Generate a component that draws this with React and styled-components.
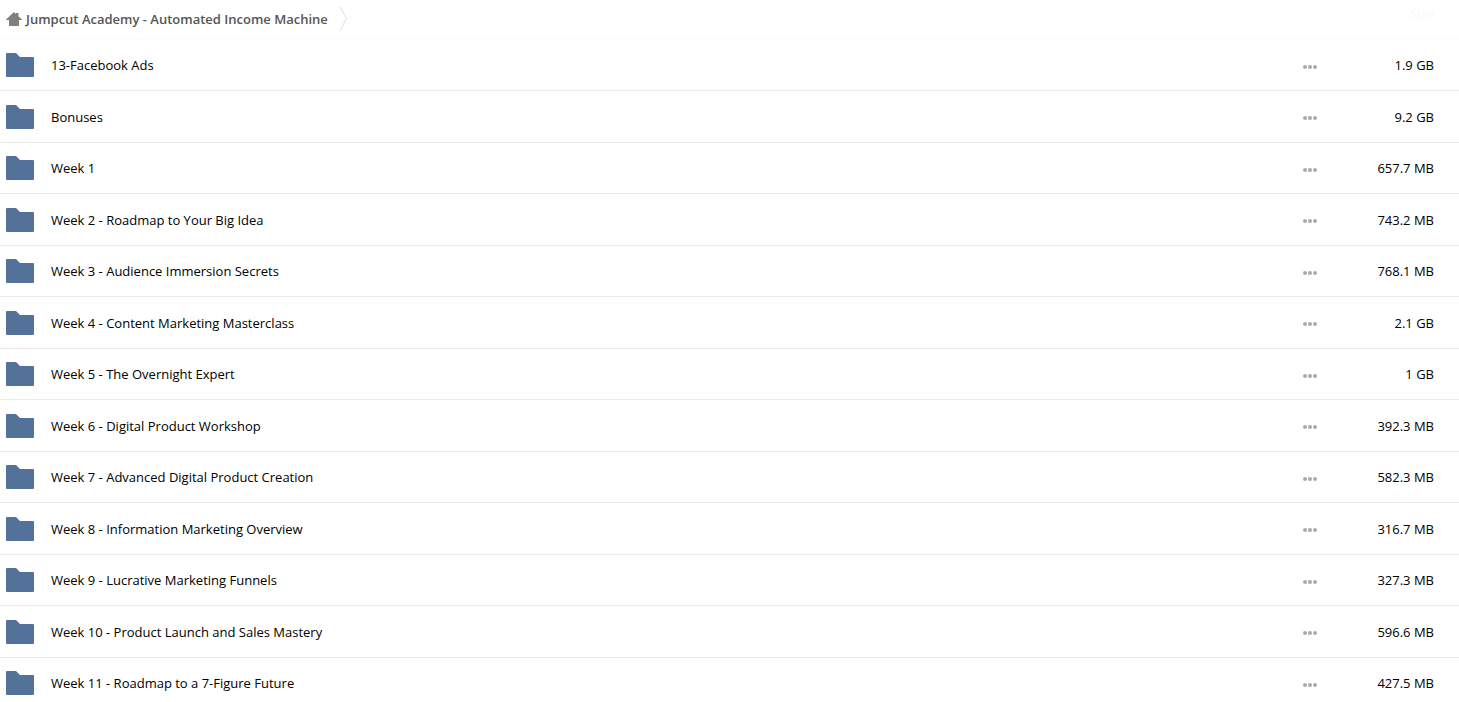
import React from "react";
import styled, { createGlobalStyle } from "styled-components";

const GlobalStyle = createGlobalStyle`
  * {
    box-sizing: border-box;
  }

  body {
    margin: 0;
    background: #ffffff;
    color: #000000;
    font-family: "Open Sans", sans-serif;
    font-size: 13px;
    line-height: 24px;
  }
`;

const Page = styled.main`
  position: relative;
  width: 100%;
`;

// Lies over the column headings, which stay faintly visible beside it.
const Breadcrumb = styled.nav`
  position: absolute;
  top: 0;
  left: 0;
  display: flex;
  align-items: center;
  height: 38px;
  padding: 0 6px;
`;

const HomeLink = styled.a`
  display: flex;
  align-items: center;
  gap: 4px;
  margin-right: 11px;
  color: #555555;
  font-weight: 600;
  text-decoration: none;
`;

const FileTable = styled.table`
  width: 100%;
  border-collapse: separate;
  border-spacing: 0;
  table-layout: fixed;
`;

const HeadRow = styled.tr`
  height: 40px;
`;

const HeadCell = styled.th`
  width: ${(props) => props.$width || "auto"};
  padding: 2px 25px 0 0;
  border-bottom: 1px solid #fcfcfc;
  color: #f9f9f9;
  font-weight: 400;
  text-align: right;
  vertical-align: top;
`;

const Row = styled.tr`
  height: 51px;

  &:nth-child(even) {
    height: 52px;
  }
`;

const Cell = styled.td`
  padding: 13px 0 0;
  border-bottom: 1px solid #ebebeb;
  vertical-align: top;

  ${Row}:nth-child(even) & {
    padding-top: 14px;
  }
`;

const IconCell = styled(Cell)`
  padding-left: 6px;
`;

const MenuCell = styled(Cell)`
  ${Row} && {
    padding-top: 15px;
  }
`;

const SizeCell = styled(Cell)`
  padding-right: 25px;
  text-align: right;
  white-space: nowrap;
`;

const FolderLink = styled.a`
  color: inherit;
  text-decoration: none;
`;

const MenuButton = styled.button`
  display: flex;
  align-items: center;
  justify-content: center;
  width: 40px;
  height: 24px;
  padding: 0;
  border: 0;
  background: none;
  cursor: pointer;
`;

const Icon = styled.svg`
  display: block;
  flex: none;
`;

const HomeIcon = () => (
  <Icon width="16" height="14" viewBox="0 0 16 14" aria-hidden="true">
    <path
      d="M8 0L10 2V1H12.5V4.2L16 7.5V8H13V14H3V8H0V7.5Z"
      fill="#808080"
    />
  </Icon>
);

const ArrowIcon = () => (
  <Icon width="9" height="26" viewBox="0 0 9 26" aria-hidden="true">
    <path d="M1 1L7.5 12.5L1 25" fill="none" stroke="#dddddd" />
  </Icon>
);

const FolderIcon = () => (
  <Icon width="28" height="24" viewBox="0 0 28 24" aria-hidden="true">
    <path
      d="M1 0H10L14 4H27Q28 4 28 5V23Q28 24 27 24H1Q0 24 0 23V1Q0 0 1 0Z"
      fill="#547199"
    />
  </Icon>
);

const DotsIcon = () => (
  <Icon width="14" height="4" viewBox="0 0 14 4" aria-hidden="true">
    <g fill="#aaaaaa">
      <circle cx="2" cy="2" r="2" />
      <circle cx="7" cy="2" r="2" />
      <circle cx="12" cy="2" r="2" />
    </g>
  </Icon>
);

const folders = [
  { name: "13-Facebook Ads", size: "1.9 GB" },
  { name: "Bonuses", size: "9.2 GB" },
  { name: "Week 1", size: "657.7 MB" },
  { name: "Week 2 - Roadmap to Your Big Idea", size: "743.2 MB" },
  { name: "Week 3 - Audience Immersion Secrets", size: "768.1 MB" },
  { name: "Week 4 - Content Marketing Masterclass", size: "2.1 GB" },
  { name: "Week 5 - The Overnight Expert", size: "1 GB" },
  { name: "Week 6 - Digital Product Workshop", size: "392.3 MB" },
  { name: "Week 7 - Advanced Digital Product Creation", size: "582.3 MB" },
  { name: "Week 8 - Information Marketing Overview", size: "316.7 MB" },
  { name: "Week 9 - Lucrative Marketing Funnels", size: "327.3 MB" },
  { name: "Week 10 - Product Launch and Sales Mastery", size: "596.6 MB" },
  { name: "Week 11 - Roadmap to a 7-Figure Future", size: "427.5 MB" },
];

const FolderRow = (props) => (
  <Row>
    <IconCell>
      <FolderIcon />
    </IconCell>
    <Cell>
      <FolderLink href="#">{props.name}</FolderLink>
    </Cell>
    <MenuCell>
      <MenuButton type="button" aria-label={`Options for ${props.name}`}>
        <DotsIcon />
      </MenuButton>
    </MenuCell>
    <SizeCell>{props.size}</SizeCell>
  </Row>
);

const App = () => (
  <Page>
    <GlobalStyle />
    <FileTable>
      <thead>
        <HeadRow>
          <HeadCell $width="51px" />
          <HeadCell aria-label="Name" />
          <HeadCell $width="40px" />
          <HeadCell $width="129px">Size</HeadCell>
        </HeadRow>
      </thead>
      <tbody>
        {folders.map((folder) => (
          <FolderRow key={folder.name} name={folder.name} size={folder.size} />
        ))}
      </tbody>
    </FileTable>
    <Breadcrumb>
      <HomeLink href="#">
        <HomeIcon />
        Jumpcut Academy - Automated Income Machine
      </HomeLink>
      <ArrowIcon />
    </Breadcrumb>
  </Page>
);

export default App;
